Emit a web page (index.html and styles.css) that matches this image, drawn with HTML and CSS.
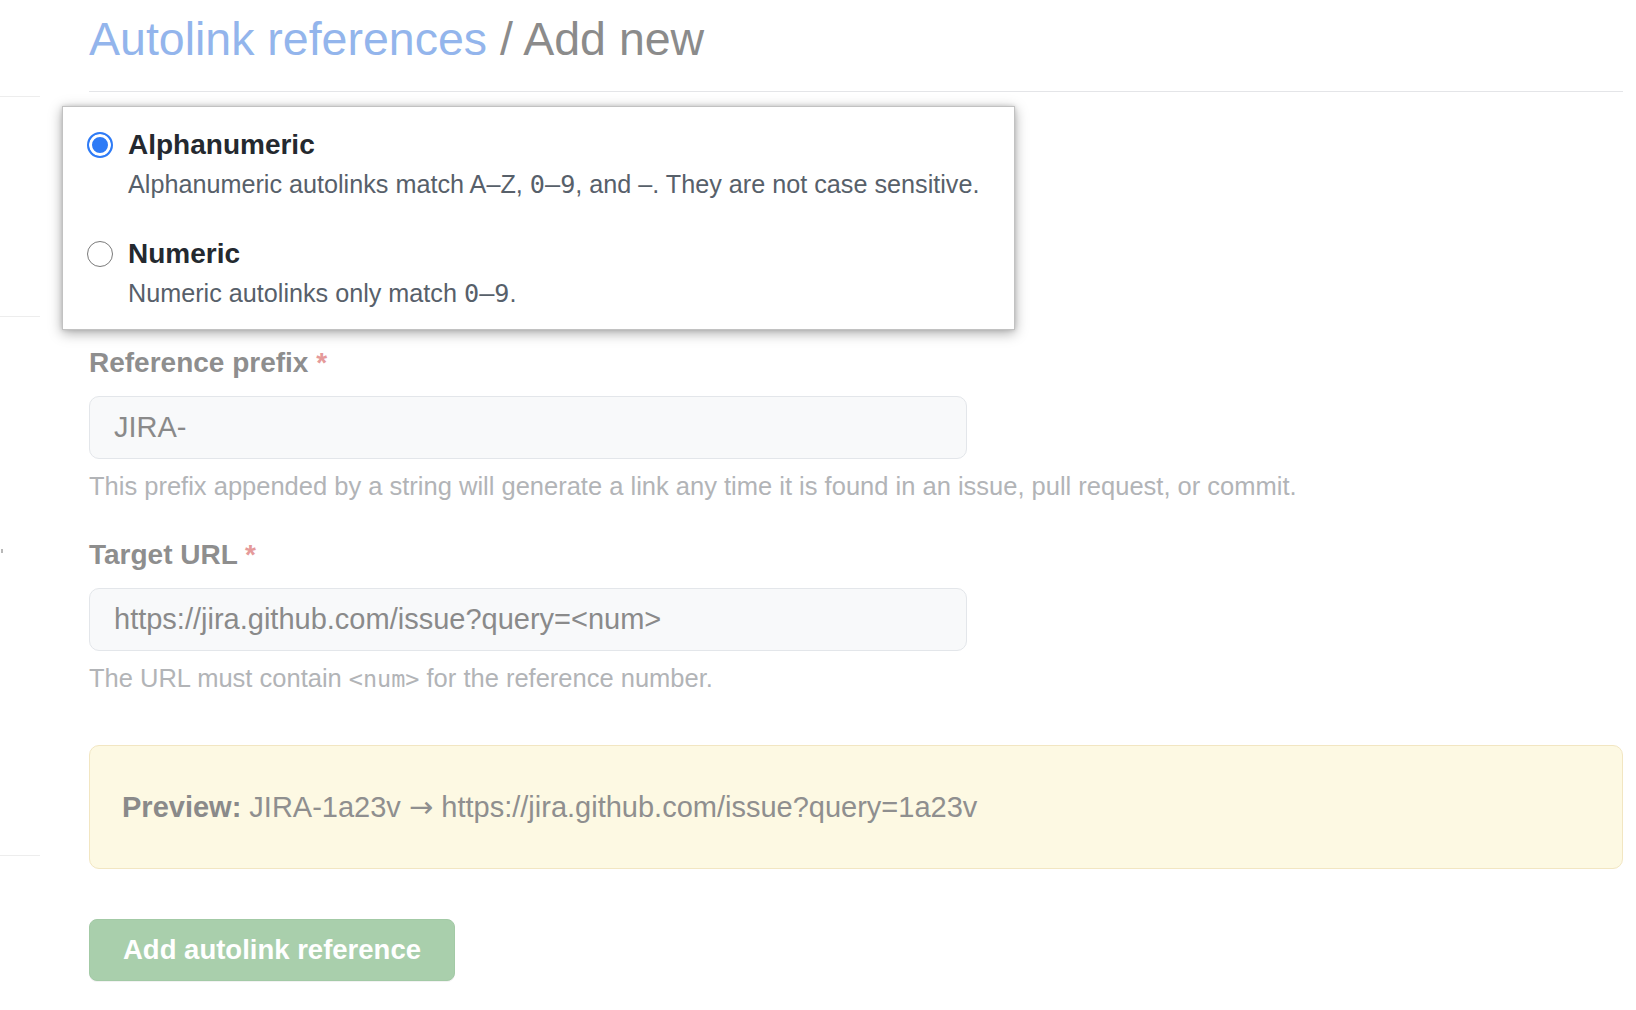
FILE: index.html
```html
<!DOCTYPE html>
<html lang="en">
<head>
<meta charset="utf-8">
<title>Autolink references / Add new</title>
<link rel="stylesheet" href="styles.css">
</head>
<body>
<div class="page">
  <aside class="sidebar">
    <div class="side-line side-line-1"></div>
    <div class="side-line side-line-2"></div>
    <div class="side-mark"></div>
    <div class="side-line side-line-3"></div>
  </aside>
  <main class="main">
    <div class="subhead">
      <h1 class="subhead-title"><span class="crumb-link">Autolink references</span> / Add new</h1>
    </div>

    <div class="format-field">
      <div class="format-menu">
        <div class="radio-item">
          <span class="radio radio-checked"></span>
          <div class="radio-text">
            <div class="radio-label">Alphanumeric</div>
            <div class="radio-note">Alphanumeric autolinks match A–Z, <code class="mono mono-note">0–9</code>, and –. They are not case sensitive.</div>
          </div>
        </div>
        <div class="radio-item radio-item-second">
          <span class="radio"></span>
          <div class="radio-text">
            <div class="radio-label">Numeric</div>
            <div class="radio-note">Numeric autolinks only match <code class="mono mono-note">0–9</code>.</div>
          </div>
        </div>
      </div>
    </div>

    <div class="form-group">
      <label class="form-label">Reference prefix <span class="req">*</span></label>
      <div class="input">JIRA-</div>
      <p class="note">This prefix appended by a string will generate a link any time it is found in an issue, pull request, or commit.</p>
    </div>

    <div class="form-group form-group-next">
      <label class="form-label">Target URL <span class="req">*</span></label>
      <div class="input">https://jira.github.com/issue?query=&lt;num&gt;</div>
      <p class="note">The URL must contain <code class="mono">&lt;num&gt;</code> for the reference number.</p>
    </div>

    <div class="preview">
      <p class="preview-text"><span class="preview-key">Preview:</span> JIRA-1a23v <span class="arrow">→</span> https://jira.github.com/issue?query=1a23v</p>
    </div>

    <button class="btn-primary" type="button">Add autolink reference</button>
  </main>
</div>
</body>
</html>
```

FILE: styles.css
```css
* { box-sizing: border-box; }

html, body {
  margin: 0;
  padding: 0;
  background: #ffffff;
}

body {
  font-family: "Liberation Sans", Arial, sans-serif;
  color: #24292f;
}

.page {
  display: flex;
  min-height: 1010px;
}

.sidebar {
  width: 40px;
  flex: 0 0 40px;
  display: flex;
  flex-direction: column;
}

.side-line {
  height: 1px;
  background: #ededed;
}
.side-line-1 { margin-top: 96px; }
.side-line-2 { margin-top: 219px; }
.side-mark {
  margin-top: 232px;
  margin-left: 1px;
  width: 2px;
  height: 4px;
  background: #b8b8b8;
}
.side-line-3 { margin-top: 302px; }

.main {
  flex: 1;
  margin-left: 49px;
  margin-right: 13px;
  display: flex;
  flex-direction: column;
  align-items: flex-start;
}

.subhead {
  align-self: stretch;
  padding-top: 10px;
  padding-bottom: 23px;
  border-bottom: 1px solid #e4e5e8;
}

.subhead-title {
  margin: 0;
  font-size: 46.5px;
  line-height: 58px;
  font-weight: 400;
  color: #8b8b8b;
}

.crumb-link {
  color: #93b5ec;
}

.format-field {
  position: relative;
  align-self: stretch;
  height: 253px;
}

.format-menu {
  position: absolute;
  top: 14px;
  left: -27px;
  width: 953px;
  padding: 20px 24px 20px;
  background: #ffffff;
  border: 1px solid #c2c2c2;
  box-shadow: 0 3px 12px rgba(0, 0, 0, 0.34), 0 0 4px rgba(0, 0, 0, 0.14);
  z-index: 2;
}

.radio-item {
  display: flex;
  align-items: flex-start;
  gap: 15px;
}

.radio-item-second {
  margin-top: 36px;
}

.radio {
  flex: 0 0 26px;
  width: 26px;
  height: 26px;
  margin-top: 5px;
  border-radius: 50%;
  border: 1.5px solid #7a7a7a;
  background: #ffffff;
}

.radio-checked {
  border: 2px solid #2e7bf6;
  background: #2e7bf6;
  box-shadow: inset 0 0 0 3px #ffffff;
}

.radio-label {
  font-size: 28px;
  line-height: 36px;
  font-weight: 700;
  color: #24292f;
}

.radio-note {
  margin-top: 6px;
  font-size: 25.2px;
  line-height: 30px;
  color: #57606a;
}

.mono {
  font-family: "DejaVu Sans Mono", "Liberation Mono", monospace;
  font-size: 0.92em;
}

.mono-note {
  font-size: 1em;
}

.form-group {
  display: flex;
  flex-direction: column;
  align-items: flex-start;
}

.form-group-next {
  margin-top: 34px;
}

.form-label {
  font-size: 28px;
  line-height: 36px;
  font-weight: 700;
  color: #8e8e8e;
  margin-bottom: 15px;
}

.req {
  color: #e59a9a;
}

.input {
  width: 878px;
  height: 63px;
  display: flex;
  align-items: center;
  padding: 0 24px;
  background: #f8f9fa;
  border: 1px solid #e3e6ea;
  border-radius: 10px;
  font-size: 29px;
  color: #8a8a8a;
}

.note {
  margin: 10px 0 0;
  font-size: 25.5px;
  line-height: 34px;
  color: #b2b4b7;
}

.preview {
  align-self: stretch;
  margin-top: 49px;
  height: 124px;
  display: flex;
  align-items: center;
  padding-left: 32px;
  background: #fdf9e3;
  border: 1px solid #f2e6c2;
  border-radius: 10px;
}

.preview-text {
  margin: 0;
  font-size: 29px;
  line-height: 36px;
  color: #8f8f8f;
}

.preview-key {
  font-weight: 700;
  color: #8a8a8a;
}

.arrow {
  font-family: "DejaVu Sans", sans-serif;
  font-size: 1em;
}

.btn-primary {
  margin-top: 50px;
  height: 62px;
  padding: 0 33px;
  background: #a9cfac;
  border: 1px solid #a3caa6;
  border-radius: 8px;
  box-shadow: 0 1px 0 rgba(27, 31, 35, 0.06);
  font-family: "Liberation Sans", Arial, sans-serif;
  font-size: 27.5px;
  font-weight: 700;
  color: #ffffff;
}
```
